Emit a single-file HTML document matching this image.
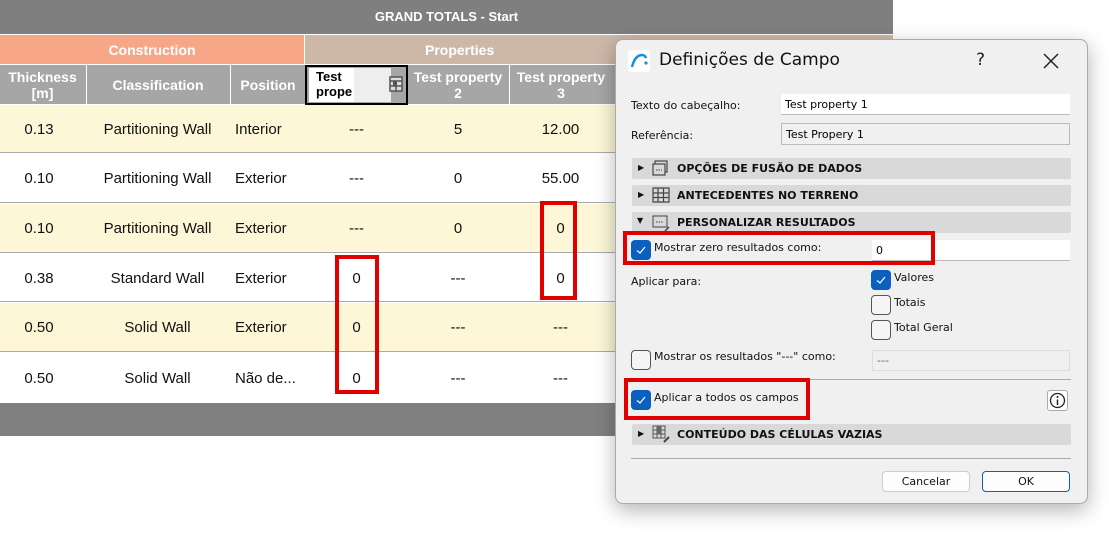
<!DOCTYPE html>
<html><head><meta charset="utf-8"><style>
*{box-sizing:border-box;margin:0;padding:0}
body{width:1109px;height:544px;position:relative;overflow:hidden;background:#fff;font-family:"Liberation Sans",Arial,sans-serif}
.a{position:absolute}
.c{position:absolute;display:flex;align-items:center;justify-content:center;text-align:center}
.l{position:absolute;display:flex;align-items:center}
.hd{color:#fff;font-weight:bold;font-size:14px;line-height:16px}
.cell{font-size:15px;color:#111}
.dl{font-family:"DejaVu Sans",sans-serif;font-size:11px;color:#111}
.sec{position:absolute;left:632px;width:439px;height:21px;background:#d9d9d9;border-radius:2px;font-family:"DejaVu Sans",sans-serif;font-weight:bold;font-size:11px;color:#111}
.cb{position:absolute;width:20px;height:20px;border-radius:4px}
.cb.on{background:#0a5fbf}
.cb.off{border:1px solid #555;background:#f5f5f5}
.red{position:absolute;border:4px solid #e00000}
.inp{position:absolute;background:#fff;border-bottom:1px solid #bbb;font-family:"DejaVu Sans",sans-serif;font-size:11px;padding-left:4px;display:flex;align-items:center}
</style></head><body>
<div class="c hd" style="left:0;top:0;width:893px;height:34px;background:#7f7f7f;font-size:13px">GRAND TOTALS - Start</div>
<div class="c hd" style="left:0;top:35px;width:304px;height:29px;background:#f7a688">Construction</div>
<div class="c hd" style="left:305px;top:35px;width:588px;height:29px;background:#cdb8a8;justify-content:flex-start;padding-left:120px">Properties</div>
<div class="a" style="left:0;top:65px;width:893px;height:39px;background:#a6a6a6"></div>
<div class="c hd" style="left:0;top:65px;width:85px;height:39px">Thickness<br>[m]</div>
<div class="c hd" style="left:86px;top:65px;width:143px;height:39px;border-left:1px solid #fff">Classification</div>
<div class="c hd" style="left:230px;top:65px;width:75px;height:39px;border-left:1px solid #fff">Position</div>
<div class="a" style="left:305px;top:65px;width:103px;height:40px;border:2px solid #000;background:#a6a6a6"></div>
<div class="a" style="left:309px;top:68px;width:82px;height:34px;background:#eee"></div>
<div class="a" style="left:309px;top:68px;width:45px;height:34px;background:#fff;font-size:13px;font-weight:bold;line-height:15px;padding:1px 0 0 7px">Test<br>prope</div>
<svg class="a" style="left:389px;top:76px" width="14" height="16"><rect x="1" y="1" width="12" height="14" fill="#ddd" stroke="#555" stroke-width="1.5"/><path d="M1 5H13M1 10H13M7 5V15" stroke="#555" stroke-width="1.5"/><rect x="4" y="5" width="4" height="5" fill="#555"/></svg>
<div class="c hd" style="left:408px;top:65px;width:100px;height:39px">Test property<br>2</div>
<div class="c hd" style="left:509px;top:65px;width:103px;height:39px;border-left:1px solid #fff">Test property<br>3</div>

<div class="a" style="left:0;top:105px;width:893px;height:48px;background:#fdf7d8;border-bottom:1px solid #aaa"></div>
<div class="a" style="left:0;top:154px;width:893px;height:49px;background:#fff;border-bottom:1px solid #aaa"></div>
<div class="a" style="left:0;top:204px;width:893px;height:49px;background:#fdf7d8;border-bottom:1px solid #aaa"></div>
<div class="a" style="left:0;top:254px;width:893px;height:48px;background:#fff;border-bottom:1px solid #aaa"></div>
<div class="a" style="left:0;top:303px;width:893px;height:49px;background:#fdf7d8;border-bottom:1px solid #aaa"></div>
<div class="a" style="left:0;top:353px;width:893px;height:50px;background:#fff"></div>
<div class="a" style="left:0;top:403px;width:893px;height:33px;background:#808080"></div>

<div class="cell">
<div class="c" style="left:0;top:105px;width:78px;height:49px">0.13</div><div class="c" style="left:86px;top:105px;width:143px;height:49px">Partitioning Wall</div><div class="l" style="left:235px;top:105px;height:49px">Interior</div><div class="c" style="left:305px;top:105px;width:103px;height:49px">---</div><div class="c" style="left:408px;top:105px;width:100px;height:49px">5</div><div class="c" style="left:509px;top:105px;width:103px;height:49px">12.00</div>
<div class="c" style="left:0;top:154px;width:78px;height:49px">0.10</div><div class="c" style="left:86px;top:154px;width:143px;height:49px">Partitioning Wall</div><div class="l" style="left:235px;top:154px;height:49px">Exterior</div><div class="c" style="left:305px;top:154px;width:103px;height:49px">---</div><div class="c" style="left:408px;top:154px;width:100px;height:49px">0</div><div class="c" style="left:509px;top:154px;width:103px;height:49px">55.00</div>
<div class="c" style="left:0;top:204px;width:78px;height:49px">0.10</div><div class="c" style="left:86px;top:204px;width:143px;height:49px">Partitioning Wall</div><div class="l" style="left:235px;top:204px;height:49px">Exterior</div><div class="c" style="left:305px;top:204px;width:103px;height:49px">---</div><div class="c" style="left:408px;top:204px;width:100px;height:49px">0</div><div class="c" style="left:509px;top:204px;width:103px;height:49px">0</div>
<div class="c" style="left:0;top:254px;width:78px;height:49px">0.38</div><div class="c" style="left:86px;top:254px;width:143px;height:49px">Standard Wall</div><div class="l" style="left:235px;top:254px;height:49px">Exterior</div><div class="c" style="left:305px;top:254px;width:103px;height:49px">0</div><div class="c" style="left:408px;top:254px;width:100px;height:49px">---</div><div class="c" style="left:509px;top:254px;width:103px;height:49px">0</div>
<div class="c" style="left:0;top:303px;width:78px;height:49px">0.50</div><div class="c" style="left:86px;top:303px;width:143px;height:49px">Solid Wall</div><div class="l" style="left:235px;top:303px;height:49px">Exterior</div><div class="c" style="left:305px;top:303px;width:103px;height:49px">0</div><div class="c" style="left:408px;top:303px;width:100px;height:49px">---</div><div class="c" style="left:509px;top:303px;width:103px;height:49px">---</div>
<div class="c" style="left:0;top:353px;width:78px;height:50px">0.50</div><div class="c" style="left:86px;top:353px;width:143px;height:50px">Solid Wall</div><div class="l" style="left:235px;top:353px;height:50px">Não de...</div><div class="c" style="left:305px;top:353px;width:103px;height:50px">0</div><div class="c" style="left:408px;top:353px;width:100px;height:50px">---</div><div class="c" style="left:509px;top:353px;width:103px;height:50px">---</div>
</div>
<div class="red" style="left:335px;top:255px;width:44px;height:139px"></div>
<div class="red" style="left:540px;top:201px;width:37px;height:99px"></div>

<div class="a" style="left:615px;top:39px;width:473px;height:465px;background:#f0f0f0;border:1px solid #aaa;border-radius:8px;box-shadow:0 6px 20px rgba(0,0,0,.3)"></div>
<svg class="a" style="left:628px;top:50px" width="22" height="22"><rect width="22" height="22" rx="3" fill="#fff"/><path d="M4 17 Q7 5 14 5 Q17 5 18 8" fill="none" stroke="#1a8fd8" stroke-width="2.5"/><circle cx="18" cy="13" r="1.6" fill="#1a8fd8"/></svg>
<div class="a" style="left:659px;top:50px;font-family:'DejaVu Sans',sans-serif;font-size:17px;color:#111">Definições de Campo</div>
<div class="a" style="left:976px;top:50px;font-family:'DejaVu Sans',sans-serif;font-size:17px;color:#222">?</div>
<svg class="a" style="left:1043px;top:53px" width="16" height="16"><path d="M1 1L15 15M15 1L1 15" stroke="#222" stroke-width="1.5"/></svg>
<div class="a dl" style="left:631px;top:99px">Texto do cabeçalho:</div>
<div class="inp" style="left:781px;top:94px;width:289px;height:21px">Test property 1</div>
<div class="a dl" style="left:631px;top:129px">Referência:</div>
<div class="inp" style="left:781px;top:123px;width:289px;height:22px;background:#f0f0f0;border:1px solid #bbb">Test Propery 1</div>

<div class="sec" style="top:158px"><span class="a" style="left:6px;top:5px;font-size:8px">▶</span><svg class="a" style="left:20px;top:2px" width="16" height="16"><rect x="3" y="1" width="12" height="11" fill="none" stroke="#444" stroke-width="1.2"/><rect x="1" y="4" width="12" height="11" fill="#d9d9d9" stroke="#444" stroke-width="1.2"/><path d="M4 10H10" stroke="#444" stroke-dasharray="1.5 1"/></svg><span class="a" style="left:45px;top:4px">OPÇÕES DE FUSÃO DE DADOS</span></div>
<div class="sec" style="top:185px"><span class="a" style="left:6px;top:5px;font-size:8px">▶</span><svg class="a" style="left:20px;top:2px" width="18" height="16"><path d="M1 1H17V15H1ZM1 6H17M1 10.5H17M6 1V15M11.5 1V15" fill="none" stroke="#444" stroke-width="1.2"/></svg><span class="a" style="left:45px;top:4px">ANTECEDENTES NO TERRENO</span></div>
<div class="sec" style="top:212px"><span class="a" style="left:5px;top:4px;font-size:8px">▼</span><svg class="a" style="left:20px;top:2px" width="18" height="18"><rect x="1" y="2" width="14" height="11" fill="none" stroke="#444" stroke-width="1"/><path d="M4 8H11" stroke="#444" stroke-dasharray="1.5 1"/><path d="M13 17L17 13" stroke="#444" stroke-width="1.5"/></svg><span class="a" style="left:45px;top:4px">PERSONALIZAR RESULTADOS</span></div>

<div class="cb on" style="left:631px;top:240px"></div>
<div class="a dl" style="left:654px;top:241px">Mostrar zero resultados como:</div>
<div class="inp" style="left:872px;top:240px;width:198px;height:21px">0</div>
<div class="red" style="left:623px;top:231px;width:312px;height:34px"></div>

<div class="a dl" style="left:631px;top:275px">Aplicar para:</div>
<div class="cb on" style="left:871px;top:270px"></div><div class="a dl" style="left:894px;top:271px">Valores</div>
<div class="cb off" style="left:871px;top:295px"></div><div class="a dl" style="left:894px;top:296px">Totais</div>
<div class="cb off" style="left:871px;top:320px"></div><div class="a dl" style="left:894px;top:321px">Total Geral</div>
<div class="cb off" style="left:631px;top:350px"></div><div class="a dl" style="left:654px;top:350px">Mostrar os resultados "---" como:</div>
<div class="inp" style="left:872px;top:350px;width:198px;height:21px;background:#f0f0f0;border:1px solid #ddd;color:#666">---</div>
<div class="a" style="left:631px;top:379px;width:440px;height:1px;background:#aaa"></div>
<div class="cb on" style="left:631px;top:390px"></div><div class="a dl" style="left:654px;top:391px">Aplicar a todos os campos</div>
<svg class="a" style="left:631px;top:240px" width="20" height="20"><path d="M6 10.5L9 13L14 7" fill="none" stroke="#fff" stroke-width="1.2"/></svg>
<svg class="a" style="left:871px;top:270px" width="20" height="20"><path d="M6 10.5L9 13L14 7" fill="none" stroke="#fff" stroke-width="1.2"/></svg>
<svg class="a" style="left:631px;top:390px" width="20" height="20"><path d="M6 10.5L9 13L14 7" fill="none" stroke="#fff" stroke-width="1.2"/></svg>
<div class="red" style="left:624px;top:378px;width:186px;height:42px"></div>
<div class="a" style="left:1047px;top:390px;width:21px;height:21px;border:1px solid #aaa;border-radius:3px;background:#fff"></div>
<svg class="a" style="left:1049px;top:392px" width="17" height="17"><circle cx="8.5" cy="8.5" r="7" fill="none" stroke="#222" stroke-width="1.3"/><circle cx="8.5" cy="5" r="1" fill="#222"/><path d="M8.5 7.5V13" stroke="#222" stroke-width="1.5"/></svg>
<div class="sec" style="top:424px"><span class="a" style="left:6px;top:5px;font-size:8px">▶</span><svg class="a" style="left:20px;top:1px" width="18" height="18"><path d="M1 1H13V13H1ZM1 5H13M1 9H13M5 1V13M9 1V13" fill="none" stroke="#555" stroke-width="1"/><rect x="5" y="1" width="4" height="8" fill="#666"/><path d="M12 17L17 12" stroke="#444" stroke-width="2"/></svg><span class="a" style="left:45px;top:4px">CONTEÚDO DAS CÉLULAS VAZIAS</span></div>
<div class="a" style="left:631px;top:458px;width:440px;height:1px;background:#aaa"></div>
<div class="c dl" style="left:882px;top:471px;width:88px;height:21px;background:#fdfdfd;border:1px solid #ccc;border-radius:4px">Cancelar</div>
<div class="c dl" style="left:982px;top:471px;width:88px;height:21px;background:#fdfdfd;border:1px solid #0a5fbf;border-radius:4px">OK</div>
</body></html>
